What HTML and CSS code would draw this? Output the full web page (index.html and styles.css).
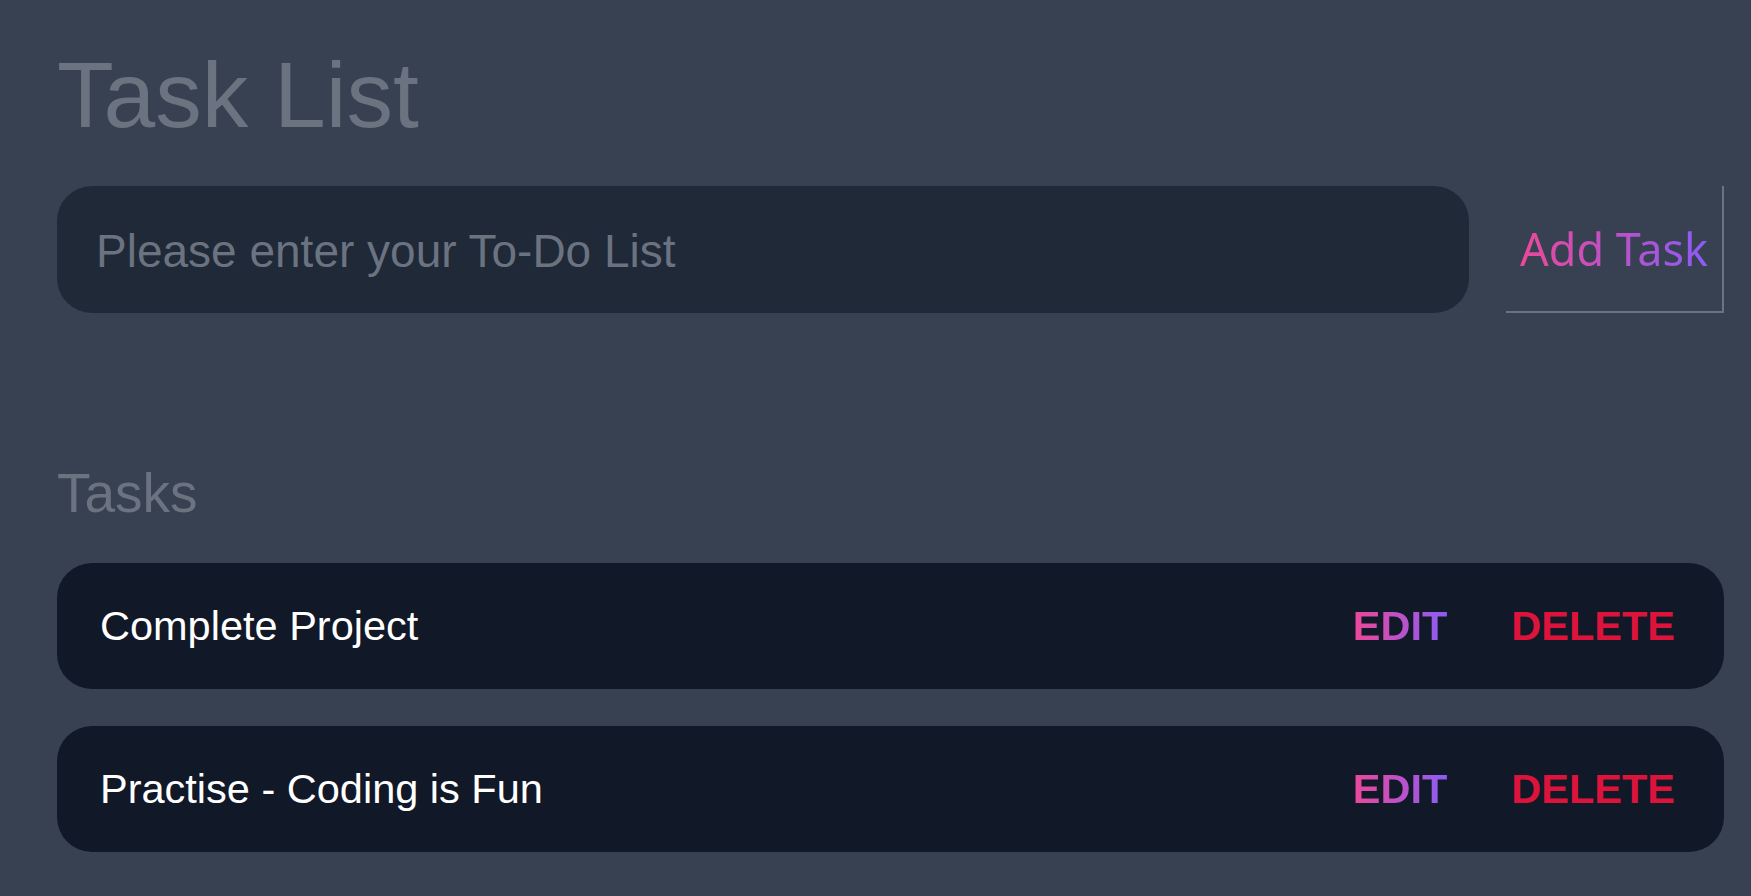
FILE: index.html
```html
<!DOCTYPE html>
<html lang="en">
<head>
<meta charset="utf-8">
<title>Task List</title>
<link rel="stylesheet" href="styles.css">
</head>
<body>
<main class="app">
  <h1 class="title">Task List</h1>
  <form class="new-task" onsubmit="return false">
    <input class="task-input" type="text" placeholder="Please enter your To-Do List">
    <button class="add-btn" type="submit"><span class="grad-text">Add Task</span></button>
  </form>
  <h2 class="section-title">Tasks</h2>
  <ul class="task-list">
    <li class="task">
      <span class="task-name">Complete Project</span>
      <div class="actions">
        <button class="action edit"><span class="grad-text">EDIT</span></button>
        <button class="action delete">DELETE</button>
      </div>
    </li>
    <li class="task">
      <span class="task-name">Practise - Coding is Fun</span>
      <div class="actions">
        <button class="action edit"><span class="grad-text">EDIT</span></button>
        <button class="action delete">DELETE</button>
      </div>
    </li>
  </ul>
</main>
</body>
</html>
```
FILE: styles.css
```css
* { box-sizing: border-box; }
html, body {
  margin: 0;
  padding: 0;
  background: #374151;
  min-height: 100%;
}
body {
  font-family: "Liberation Sans", Arial, sans-serif;
  color: #ffffff;
}
.app {
  padding: 42px 27px 40px 57px;
}
.title {
  margin: 0;
  font-size: 93px;
  line-height: 1.15;
  font-weight: 400;
  color: #6b7280;
}
.new-task {
  margin: 37px 0 0 0;
  display: flex;
  gap: 37px;
  align-items: stretch;
}
.task-input {
  flex: 1;
  height: 127px;
  border: none;
  outline: none;
  border-radius: 35px;
  background: #1f2937;
  padding: 3px 0 0 39px;
  font-family: "Liberation Sans", Arial, sans-serif;
  font-size: 46px;
  color: #ffffff;
}
.task-input::placeholder {
  color: #6b7280;
}
.add-btn {
  width: 218px;
  height: 127px;
  background: transparent;
  border: none;
  border-right: 2px solid #6b7280;
  border-bottom: 2px solid #6b7280;
  padding: 0 0 0 0;
  font-family: "Noto Sans", sans-serif;
  font-size: 45px;
  font-weight: 400;
  cursor: pointer;
}
.grad-text {
  background: linear-gradient(to right, #ec4899, #8b5cf6);
  -webkit-background-clip: text;
  background-clip: text;
  color: transparent;
}
.section-title {
  margin: 149px 0 0 0;
  font-size: 55px;
  line-height: 1.15;
  font-weight: 400;
  color: #6b7280;
}
.task-list {
  list-style: none;
  margin: 38px 0 0 0;
  padding: 0;
  display: flex;
  flex-direction: column;
  gap: 37px;
}
.task {
  height: 126px;
  border-radius: 35px;
  background: #111827;
  display: flex;
  align-items: center;
  justify-content: space-between;
  padding: 0 49px 0 43px;
}
.task-name {
  font-size: 41.5px;
  color: #ffffff;
}
.actions {
  display: flex;
  align-items: center;
  gap: 64px;
}
.action {
  background: none;
  border: none;
  padding: 0;
  font-family: "Liberation Sans", Arial, sans-serif;
  font-size: 41.5px;
  font-weight: 700;
  cursor: pointer;
}
.delete {
  color: #dc143c;
}
```
